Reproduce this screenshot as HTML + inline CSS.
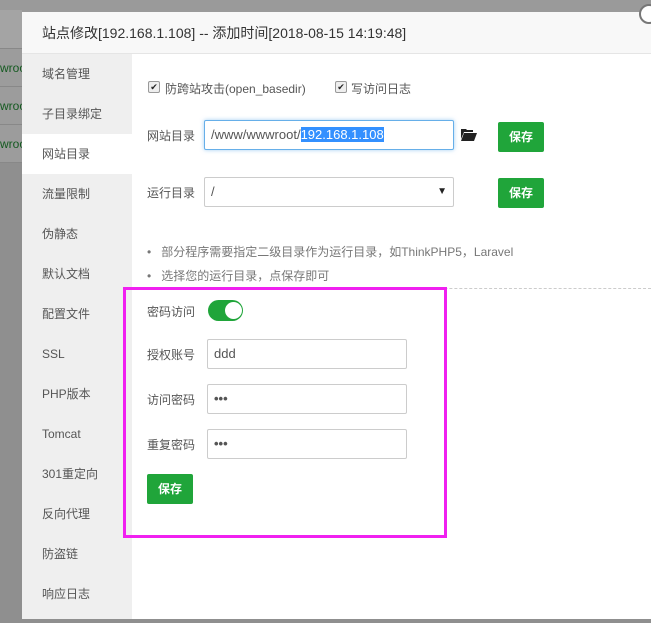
<!DOCTYPE html>
<html><head><meta charset="utf-8"><style>
*{margin:0;padding:0;box-sizing:border-box}
body{width:651px;height:623px;background:#8f8f8f;font-family:"Liberation Sans","Noto Sans CJK SC",sans-serif;font-size:12px;color:#333;position:relative;overflow:hidden}
.a{position:absolute}
.bgrow{position:absolute;left:0;width:22px;background:#9c9c9c;border-bottom:1px solid #888;color:#145a20;font-size:12px;overflow:hidden;white-space:nowrap}
.dlg{left:22px;top:12px;width:640px;height:607px;background:#fff}
.title{left:0;top:0;width:640px;height:42px;background:#f8f8f8;border-bottom:1px solid #e5e5e5;font-size:14px;line-height:42px;padding-left:20px;color:#333}
.side{left:0;top:42px;width:110px;height:565px;background:#efefef}
.side div{height:40px;line-height:40px;padding-left:20px;font-size:12px;color:#555}
.side .on{background:#fff}
.lbl{font-size:12px;color:#555}
.inp{border:1px solid #ccc;border-radius:2px;background:#fff;font-size:13px;line-height:28px;padding-left:6px;color:#555}
.btn{background:#20a53a;color:#fff;font-size:12px;font-weight:bold;text-align:center;border-radius:2px}
.cb{width:12px;height:12px;border:1px solid #999;border-radius:2px;background:#eee;font-size:9px;line-height:10px;text-align:center;color:#222}
</style></head><body>
<div class="a" style="left:0;top:0;width:651px;height:12px;background:#9a9a9a"></div>
<div class="bgrow" style="top:10px;height:39px;background:#a4a4a4"></div>
<div class="bgrow" style="top:49px;height:38px;line-height:38px">wroo</div>
<div class="bgrow" style="top:87px;height:38px;line-height:38px">wroo</div>
<div class="bgrow" style="top:125px;height:38px;line-height:38px">wroo</div>
<div class="a dlg">
 <div class="a title">站点修改[192.168.1.108] -- 添加时间[2018-08-15 14:19:48]</div>
 <div class="a side">
  <div>域名管理</div><div>子目录绑定</div><div class="on">网站目录</div><div>流量限制</div><div>伪静态</div><div>默认文档</div><div>配置文件</div><div>SSL</div><div>PHP版本</div><div>Tomcat</div><div>301重定向</div><div>反向代理</div><div>防盗链</div><div>响应日志</div>
 </div>
</div>
<div class="a" style="left:639px;top:4px;width:20px;height:20px;border-radius:50%;background:#fff;border:2px solid #777"></div>
<div class="a cb" style="left:148px;top:81px">✔</div>
<div class="a lbl" style="left:165px;top:80px">防跨站攻击(open_basedir)</div>
<div class="a cb" style="left:335px;top:81px">✔</div>
<div class="a lbl" style="left:351px;top:80px">写访问日志</div>
<div class="a lbl" style="left:147px;top:127px">网站目录</div>
<div class="a inp" style="left:204px;top:120px;width:250px;height:30px;border-color:#66afe9;box-shadow:0 0 4px rgba(102,175,233,.6)">/www/wwwroot/<span style="background:#3390ff;color:#fff">192.168.1.108</span></div>
<svg class="a" style="left:461px;top:128px" width="16" height="13" viewBox="0 0 16 13"><path d="M0 1h5l1 1h6v2H3L0 11z M3 5h13l-3 8H0z" fill="#222"/></svg>
<div class="a btn" style="left:498px;top:122px;width:46px;height:30px;line-height:30px">保存</div>
<div class="a lbl" style="left:147px;top:184px">运行目录</div>
<div class="a inp" style="left:204px;top:177px;width:250px;height:30px">/<span style="position:absolute;right:6px;font-size:10px;color:#222">▼</span></div>
<div class="a btn" style="left:498px;top:178px;width:46px;height:30px;line-height:30px">保存</div>
<div class="a lbl" style="left:147px;top:243px;color:#777">•&nbsp;&nbsp;&nbsp;部分程序需要指定二级目录作为运行目录，如ThinkPHP5，Laravel</div>
<div class="a lbl" style="left:147px;top:267px;color:#777">•&nbsp;&nbsp;&nbsp;选择您的运行目录，点保存即可</div>
<div class="a" style="left:360px;top:288px;width:291px;border-top:1px dashed #ccc"></div>
<div class="a" style="left:123px;top:287px;width:324px;height:251px;border:3px solid #f020f0"></div>
<div class="a lbl" style="left:147px;top:303px">密码访问</div>
<div class="a" style="left:208px;top:300px;width:35px;height:21px;border-radius:11px;background:#20a53a"></div>
<div class="a" style="left:225px;top:302px;width:17px;height:17px;border-radius:50%;background:#fff"></div>
<div class="a lbl" style="left:147px;top:346px">授权账号</div>
<div class="a inp" style="left:207px;top:339px;width:200px;height:30px">ddd</div>
<div class="a lbl" style="left:147px;top:391px">访问密码</div>
<div class="a inp" style="left:207px;top:384px;width:200px;height:30px;font-weight:bold">•••</div>
<div class="a lbl" style="left:147px;top:436px">重复密码</div>
<div class="a inp" style="left:207px;top:429px;width:200px;height:30px;font-weight:bold">•••</div>
<div class="a btn" style="left:147px;top:474px;width:46px;height:30px;line-height:30px">保存</div>
</body></html>
